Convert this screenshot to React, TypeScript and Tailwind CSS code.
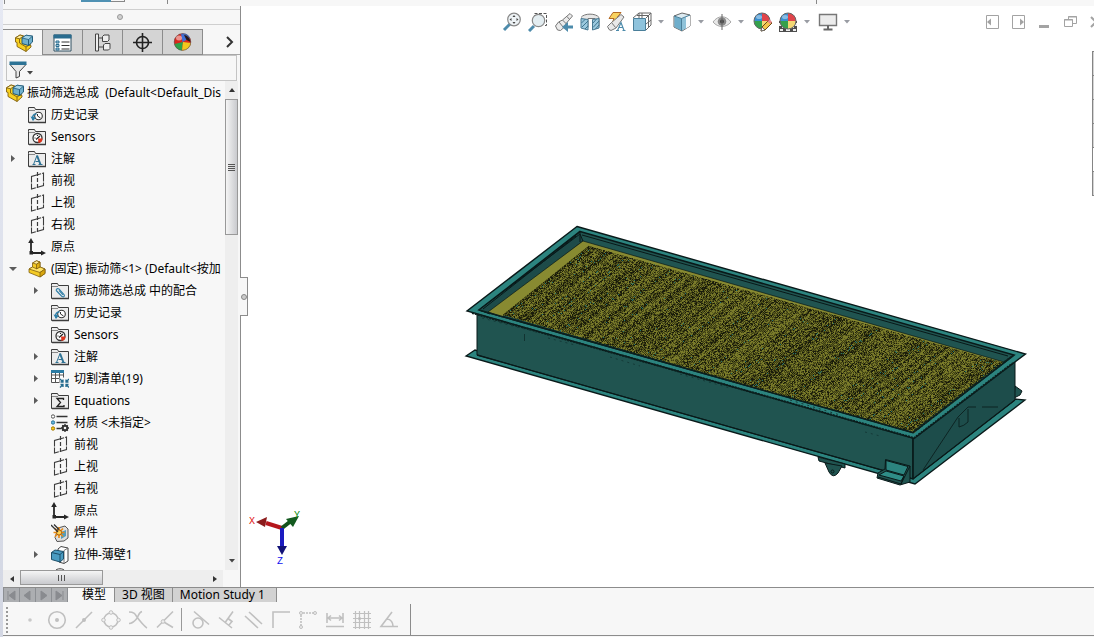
import React, { useState } from 'react';

type IconName =
  | 'assembly'
  | 'part'
  | 'history'
  | 'sensor'
  | 'note'
  | 'mate'
  | 'equation'
  | 'plane'
  | 'origin'
  | 'cutlist'
  | 'material'
  | 'weldment'
  | 'extrude'
  | 'sketch';

interface TreeNode {
  label: string;
  icon: IconName;
  level: 0 | 1 | 2;
  arrow?: 'open' | 'closed';
}

const nodes: TreeNode[] = [
  { label: '振动筛选总成  (Default<Default_Dis', icon: 'assembly', level: 0 },
  { label: '历史记录', icon: 'history', level: 1 },
  { label: 'Sensors', icon: 'sensor', level: 1 },
  { label: '注解', icon: 'note', level: 1, arrow: 'closed' },
  { label: '前视', icon: 'plane', level: 1 },
  { label: '上视', icon: 'plane', level: 1 },
  { label: '右视', icon: 'plane', level: 1 },
  { label: '原点', icon: 'origin', level: 1 },
  { label: '(固定) 振动筛<1> (Default<按加', icon: 'part', level: 1, arrow: 'open' },
  { label: '振动筛选总成 中的配合', icon: 'mate', level: 2, arrow: 'closed' },
  { label: '历史记录', icon: 'history', level: 2 },
  { label: 'Sensors', icon: 'sensor', level: 2 },
  { label: '注解', icon: 'note', level: 2, arrow: 'closed' },
  { label: '切割清单(19)', icon: 'cutlist', level: 2, arrow: 'closed' },
  { label: 'Equations', icon: 'equation', level: 2, arrow: 'closed' },
  { label: '材质 <未指定>', icon: 'material', level: 2 },
  { label: '前视', icon: 'plane', level: 2 },
  { label: '上视', icon: 'plane', level: 2 },
  { label: '右视', icon: 'plane', level: 2 },
  { label: '原点', icon: 'origin', level: 2 },
  { label: '焊件', icon: 'weldment', level: 2 },
  { label: '拉伸-薄壁1', icon: 'extrude', level: 2, arrow: 'closed' },
  { label: '', icon: 'sketch', level: 2 },
];

const Part = () => (
  <g stroke="#80600f" strokeWidth=".8" strokeLinejoin="round">
    <path d="M1 9 4.500 7V3L8.500.8 12 2v5l5 2v4.500L12 17 1 12.500z" fill="#f4cb24" />
    <path d="M4.500 3 8.500.8 12 2 8.500 4.200z" fill="#ffec9a" />
    <path d="M1 9 4.500 7 8 8.500 12 7l5 2-5 3.500z" fill="#ffe468" />
    <path d="M8.500 4.200V9L12 7V2z" fill="#e0b012" />
    <path d="M12 12.500V17l5-3.500V9z" fill="#d8a60e" />
  </g>
);

// Everything a feature-tree icon can show, on an 18px grid
const TreeIcon: React.FC<{ name: IconName }> = ({ name }) => {
  const folder = (
    <g>
      <path d="M.5 3.500V1.500h6l1 2h10v13H.5z" fill="#ececec" stroke="#3c3c3c" strokeLinejoin="round" />
      <path d="M1 4.500h6" stroke="#888" />
      <path d="M1 16.500h17" stroke="#3c3c3c" strokeWidth="1.500" />
    </g>
  );
  return (
    <svg viewBox="0 0 18 18" className="h-[18px] w-[18px] shrink-0" fill="none">
      {name === 'assembly' && (
        <g>
          <g stroke="#80600f" strokeWidth=".9" strokeLinejoin="round">
            <path d="M.5 3.800 5 1l3.500 1v8l7.500 1.500V13l-5 4.500L2 12.500V8.500L.5 8z" fill="#f8d020" />
            <path d="M.5 3.800 5 1l3.500 1L4.500 4.800z" fill="#ffee9e" />
            <path d="M4.500 4.800V9l6.500 4v4.500M11 13l5-3" />
          </g>
          <path d="m7 4 4-2.800 6.500 1V8l-4 3.500L7 9.500z" fill="#6fb0cd" stroke="#235d7b" />
          <path d="m7 4 6.500 1.500 4-3.300L11 1.200z" fill="#a4d4e8" stroke="#235d7b" strokeWidth=".8" />
          <path d="M13.500 5.500v6" stroke="#235d7b" />
        </g>
      )}
      {name === 'part' && <Part />}
      {['history', 'sensor', 'note', 'mate', 'equation'].includes(name) && folder}
      {name === 'history' && (
        <g>
          <circle cx="10.500" cy="10" r="3.800" fill="#fff" stroke="#333" strokeWidth="1.100" />
          <path d="M9.500 8v2l3 2" stroke="#333" />
          <path d="M5 14c-1.500-4 1-6.500 3.500-6" stroke="#2b7ea8" strokeWidth="1.500" />
          <path d="m2.500 10.500 5.500 1-3 3.500z" fill="#2b7ea8" />
        </g>
      )}
      {name === 'sensor' && (
        <g>
          <circle cx="9.500" cy="10" r="4.500" fill="#fff" stroke="#333" strokeWidth="1.300" />
          <path d="M10 10.500h4.500a4.500 4.500 0 0 1-4 4.500z" fill="#e0341c" />
          <path d="m8 11.500 4-3.500M6.500 10h1M9.500 7v1" stroke="#222" strokeWidth="1.200" />
        </g>
      )}
      {name === 'note' && (
        <g stroke="#2f7294">
          <path d="m9 5.500 3.500 9" strokeWidth="2" />
          <path d="M9 5.500 5.500 14.500M7.500 11.500h4M4.500 14.500h3M10.500 14.500h4" />
        </g>
      )}
      {name === 'mate' && (
        <g stroke="#2f7ea6" strokeWidth="1.100">
          <path d="m6 9 5 5.500c2 1 3-.5 2-2L8 7c-2-1-3.500.5-2.500 2l5 5M8 8.500l4 4.500" />
        </g>
      )}
      {name === 'equation' && (
        <path d="M12.500 8V6.500H6l3.500 4-3.500 4h7V13" stroke="#222" strokeWidth="1.300" />
      )}
      {name === 'plane' && (
        <g stroke="#3c3c3c">
          <path d="M3.500 4.500 15.500 1v12.500L3.500 17z" strokeWidth="1.100" strokeDasharray="10 1" />
          <path d="M9.500 0v17.500" strokeDasharray="4 2" strokeWidth="1.200" />
        </g>
      )}
      {name === 'origin' && (
        <g>
          <path d="M3 4v11h10" stroke="#262626" strokeWidth="1.800" />
          <path d="M3 0 .2 5h5.600zM18 15l-5-2.600v5.200zM1.500 13h3.500v3.500H1.500z" fill="#262626" />
        </g>
      )}
      {name === 'cutlist' && (
        <g>
          <path d="M.5 1.500h12v11H.5zM4.500 1v11M8.500 1v11M.5 5h12M.5 8.500h12" fill="#fff" stroke="#555" />
          <path d="M0 0h13v3H0z" fill="#2b7ba3" />
          <path d="M8.500 7.500H18V18H8.500z" fill="#f7f7f7" />
          <path
            d="m9 9 3 3M9.500 12H12V9.500M18 9l-3 3M17.500 12H15V9.500M9 17.500l3-3M9.500 14.500H12V17M18 17.500l-3-3M17.500 14.500H15V17"
            stroke="#246b8e"
            strokeWidth="1.300"
          />
        </g>
      )}
      {name === 'material' && (
        <g>
          <path d="M5.500 2.500h11M5.500 8.500h11M5.500 14.500h5" stroke="#333" strokeWidth="1.500" />
          <circle cx="2" cy="2.500" r="1.700" fill="#fff" stroke="#555" />
          <circle cx="2" cy="8.500" r="1.700" fill="#62b4dc" stroke="#2c7598" />
          <circle cx="2" cy="14.500" r="1.700" fill="#f8c81c" stroke="#a37a05" />
          <circle cx="14" cy="14" r="2.300" stroke="#333" strokeWidth="2" />
          <path d="M14 10v8M10 14h8M11.200 11.200l5.600 5.600M16.800 11.200l-5.600 5.600" stroke="#333" strokeWidth="1.300" strokeDasharray="2 4" />
        </g>
      )}
      {name === 'weldment' && (
        <g>
          <path d="M7 4 14 2l3 3v9l-4 3-7 .5-2-4z" fill="#dedede" stroke="#555" />
          <path d="m10 8 5-2v6l-5 3z" fill="#519dc0" />
          <path d="M8 3v11M2.500 8.500h11M4 4.500l8 8M12 4.500l-8 8" stroke="#ed8b13" strokeWidth="1.600" />
          <circle cx="8" cy="8.500" r="2.600" fill="#ffd253" stroke="#a85d09" />
          <path d="m0 1 7 7M3 .5l5 5" stroke="#333" strokeWidth="1.300" />
        </g>
      )}
      {name === 'extrude' && (
        <g strokeLinejoin="round">
          <path d="m7 3 3-2.500 7 1.500v13l-4 2.500-5-1.500z" fill="#fff" stroke="#444" />
          <path d="M13 4.500v13M13 4.500l4-2.500" stroke="#777" />
          <path d="M.5 6.500 4 4l8.500 1.500v7.500L9 16 .5 13.500z" fill="#4a9cc2" stroke="#1d4e68" />
          <path d="m.5 6.500 8.500 2 3.500-3M9 8.500V16" stroke="#1d4e68" />
        </g>
      )}
      {name === 'sketch' && <path d="M4 3c2-3 8-3 10 0v8H4z" fill="#eee" stroke="#444" />}
    </svg>
  );
};

const Caret = ({ dark = false }: { dark?: boolean }) => (
  <svg viewBox="0 0 6 4" className="h-1 w-[6px] shrink-0">
    <path d="M0 0h6L3 3.500z" fill={dark ? '#444' : '#999ca3'} />
  </svg>
);

const Ball = () => (
  <g>
    <path d="M10 9H2a8 8 0 0 1 8-8z" fill="#3a8fd0" />
    <path d="M10 9V1a8 8 0 0 1 8 8z" fill="#e0444a" />
    <path d="M2 9h8v8a8 8 0 0 1-8-8z" fill="#35a04c" />
    <path d="M10 17V9h8a8 8 0 0 1-8 8z" fill="#f3d774" />
    <circle cx="10" cy="9" r="8" fill="none" stroke="#666" strokeWidth="1" />
    <ellipse cx="7" cy="5" rx="3" ry="2" fill="#fff" opacity=".4" />
  </g>
);

const panelTabs = [
  { label: 'FeatureManager', art: null },
  {
    label: 'PropertyManager',
    art: (
      <g>
        <path d="M1 2h17v16H1z" fill="#fff" stroke="#2e4f61" />
        <path d="M.5 1.500h18v4H.5z" fill="#2a6c8f" />
        <path d="M3 8h3v2H3zM3 11.500h3v2H3zM3 15h3v2H3z" stroke="#2a6c8f" fill="#a8cfe2" />
        <path d="M8.500 9h8M8.500 12.500h8M8.500 16h8" stroke="#333" />
      </g>
    ),
  },
  {
    label: 'ConfigurationManager',
    art: (
      <g stroke="#444" fill="#eee">
        <path d="M2.500 1h3v17h-3zM5.500 5h4M5.500 14h5" />
        <path d="M9.500 3.500 11 2h5v5l-1.500 1.500h-5zM10.500 12 12 10.500h5v5L15.500 17h-5z" />
      </g>
    ),
  },
  {
    label: 'DimXpertManager',
    art: (
      <g stroke="#222" strokeWidth="1.600">
        <circle cx="9.500" cy="9.500" r="6" />
        <path d="M9.500 0v19M0 9.500h19" />
      </g>
    ),
  },
  {
    label: 'DisplayManager',
    art: (
      <g>
        <circle cx="9.500" cy="9" r="8.500" fill="#d9271c" />
        <path d="M10 9 1.500 11a8.500 8.500 0 0 0 7.500 6.500z" fill="#2da34a" />
        <path d="M9.500 9 8 1c4-1.500 8 1 9 4z" fill="#3f6fd8" />
        <path d="M9 17.500 10 9l8 1a8.500 8.500 0 0 1-9 7.500z" fill="#f4c81c" />
        <path d="M11 2c3 0 6 3 6.500 7l-4-2z" fill="#2b1717" />
        <circle cx="9.500" cy="9" r="8.300" stroke="#555" strokeWidth=".6" />
        <ellipse cx="6" cy="5" rx="3" ry="2.500" fill="#fff" opacity=".5" />
      </g>
    ),
  },
];

const viewTools: { label: string; caret?: boolean; box: string; art: React.ReactNode }[] = [
  {
    label: 'Zoom to Fit',
    box: 'w-[26px]',
    art: (
      <g>
        <path d="m8 12-6 6" stroke="#4d8bab" strokeWidth="3" />
        <circle cx="12" cy="7.500" r="6.300" fill="#eef3f6" stroke="#888" strokeWidth="1.200" />
        <path d="M12 3 10.500 5h3zM12 12 10.500 10h3zM7.500 7.500l2-1.500v3zM16.500 7.500l-2-1.500v3z" fill="#444" />
      </g>
    ),
  },
  {
    label: 'Zoom to Area',
    box: 'w-[26px]',
    art: (
      <g>
        <path d="M6.500 6V1.500h12v12H16" stroke="#555" strokeDasharray="3 1.500" />
        <path d="m6 14-5 5" stroke="#4d8bab" strokeWidth="3" />
        <circle cx="10.500" cy="8.500" r="6.200" fill="#e3edf1" stroke="#888" strokeWidth="1.200" />
      </g>
    ),
  },
  {
    label: 'Previous View',
    box: 'w-[26px]',
    art: (
      <g>
        <path d="m1.500 14 3-4 4-2L16 1.500l2.500 2.500-6 7-2 4-4 3.500-3-.5z" fill="#ebebeb" stroke="#777" />
        <path d="m5 10 4.500 5.500M8.500 8l4 4M13 4.500l2.500 3" stroke="#777" />
        <path d="M19 13.500h-5v-3.500l-6 5 6 5v-3.500h5z" fill="#4d8bab" />
      </g>
    ),
  },
  {
    label: 'Section View',
    box: 'w-[26px]',
    art: (
      <g>
        <path d="M1 5.500C4 1 16 1 19 5.500v9l-4 1V6.500H8v9" fill="#e7e7e7" stroke="#777" />
        <path d="M1 6.500 8 7.500V18l-7-2zM12.500 7.500l6.500-1V16l-6.500 2z" fill="#9cc9de" stroke="#4a7a93" />
        <path d="m1.500 11 4-4M2 15l6-6M5 17l3-3M13 11l3.500-4M13 15.500l6-6.500M15.500 17l3.500-4" stroke="#3f7691" />
      </g>
    ),
  },
  {
    label: 'Dynamic Annotation Views',
    box: 'w-[26px]',
    art: (
      <g>
        <path d="M7 .5h8L11.500 5h3l-9 7.500 2.500-6H3z" fill="#f9d35f" stroke="#b36a24" />
        <path d="m1.500 14.500 4-4L15 2.500l3 2.500-8 11-5 2.500-2-1z" fill="#e8e8e8" stroke="#777" />
        <path d="m5.500 10.500 4 5" stroke="#777" />
        <path d="M11.500 18.500 15 10.500l3 8M12.500 15.500h4.500M10 18.500h3M16.500 18.500h3" stroke="#4d8bab" strokeWidth="1.200" />
      </g>
    ),
  },
  {
    label: 'View Orientation',
    box: 'w-10',
    caret: true,
    art: (
      <g>
        <path d="m1 6 6-5h12v12l-5 5M14 6l5-5M10 1v6M7 1v6M5 3.500h12M16.500 4v11M14 12l5-4" stroke="#666" />
        <path d="M1.500 6.500h12v12h-12z" fill="#8fc3dc" stroke="#4a7f9a" />
      </g>
    ),
  },
  {
    label: 'Display Style',
    box: 'w-10',
    caret: true,
    art: (
      <g strokeLinejoin="round">
        <path d="m2 4 8-3 8 2v11l-8 5-8-4z" fill="#dcebf2" stroke="#666" />
        <path d="m2.500 4.500 7 2v12l-7-3.500z" fill="#6faecb" />
        <path d="m10 6.500 4-1.500v11.500L10 18.500z" fill="#8ec2d9" />
        <path d="m14 5 4-1.500V14l-4 2.500z" fill="#f6fafc" />
        <path d="m2 4 7.500 2.500L18 3M9.500 6.500V19" stroke="#4a7f9a" />
      </g>
    ),
  },
  {
    label: 'Hide/Show Items',
    box: 'w-10',
    caret: true,
    art: (
      <g>
        <path d="M1 10c5-7 13-7 18 0-5 6-13 6-18 0z" fill="#e8e8e8" stroke="#aaa" />
        <circle cx="10" cy="9.500" r="4.300" fill="#888" />
        <circle cx="10" cy="9.500" r="2" fill="#444" />
        <path d="M10 2v16" stroke="#666" />
      </g>
    ),
  },
  {
    label: 'Edit Appearance',
    box: 'w-[26px]',
    art: (
      <g>
        <Ball />
        <path d="m9 19 1-4 7-7 3 3-7 7z" fill="#f5c54c" stroke="#6b4a17" />
        <path d="m9 19 1-4 3 3z" fill="#fff" stroke="#555" strokeWidth=".8" />
        <path d="m15.500 9.500 2-2 2.500 2.500-2 2z" fill="#e9868a" />
      </g>
    ),
  },
  {
    label: 'Apply Scene',
    box: 'w-10',
    caret: true,
    art: (
      <g>
        <path d="M1 9h18v11H1z" fill="#4d4d4d" />
        <path d="M1 11h3v3H1zM16 11h3v3h-3zM4 14h3v2H4zM13 14h3v2h-3zM2 17h3v2H2zM8 17h4v2H8zM15 17h3v2h-3z" fill="#eee" />
        <Ball />
      </g>
    ),
  },
  {
    label: 'View Settings',
    box: 'w-10',
    caret: true,
    art: (
      <g>
        <path d="M1.500 2.500h17v11h-17z" fill="#ececec" stroke="#777" strokeWidth="1.400" />
        <path d="M10 13.500V17M5.500 17.500h9" stroke="#666" strokeWidth="2" />
      </g>
    ),
  },
];

const sketchTools: { label: string; art: React.ReactNode }[] = [
  { label: 'Point', art: <circle cx="10" cy="10" r="1.800" fill="#c9c9c9" stroke="none" /> },
  {
    label: 'Center Point',
    art: (
      <g>
        <circle cx="10" cy="10" r="8.300" />
        <circle cx="10" cy="10" r="1.200" fill="#bbb" />
      </g>
    ),
  },
  {
    label: 'Midpoint',
    art: (
      <g>
        <path d="m2 18 16-16" />
        <circle cx="10" cy="10" r="1.200" fill="#bbb" />
      </g>
    ),
  },
  {
    label: 'Quadrant',
    art: (
      <g>
        <circle cx="10" cy="10" r="7" />
        <g fill="#f0f0f0" strokeWidth="1">
          <circle cx="10" cy="2.500" r="1.800" />
          <circle cx="10" cy="17.500" r="1.800" />
          <circle cx="2.500" cy="10" r="1.800" />
          <circle cx="17.500" cy="10" r="1.800" />
        </g>
      </g>
    ),
  },
  { label: 'Intersection', art: <path d="M1 2c5 0 6 2 8 5s8 10 10 11M14 1.500c-4 1-3 5-6 8s-4 4-7 4" /> },
  {
    label: 'Nearest',
    art: (
      <g>
        <path d="M18 1.500 2 17.500M8 11.500l10 6" />
        <circle cx="8" cy="11.500" r="1.800" fill="#eee" strokeWidth="1" />
      </g>
    ),
  },
  {
    label: 'Tangent',
    art: (
      <g>
        <circle cx="8" cy="13" r="5" />
        <path d="m4 1.500 15 13" />
      </g>
    ),
  },
  { label: 'Perpendicular', art: <path d="M2 7.500 15 18M16 1.500 8.500 12M11 8.500l4 3-3 3.500" /> },
  { label: 'Parallel', art: <path d="m1 6 13 12M5 2l13 12" /> },
  { label: 'Horizontal/Vertical Lines', art: <path d="M2 18V2h17" /> },
  {
    label: 'Horizontal/Vertical to Points',
    art: (
      <g>
        <path d="M3 5v11M5 3h11" strokeDasharray="2 1" />
        <g fill="#eee" strokeWidth="1">
          <circle cx="3" cy="3" r="1.500" />
          <circle cx="17" cy="3" r="1.500" />
          <circle cx="3" cy="17" r="1.500" />
        </g>
      </g>
    ),
  },
  { label: 'Length', art: <path d="M2 3v10M18 3v10M3 8h14M6 5.500 3 8l3 2.500M14 5.500 17 8l-3 2.500M1 16.500h18" /> },
  {
    label: 'Grid',
    art: (
      <g strokeWidth="1.200">
        <path d="M1 3.500h18M1 8.500h18M1 12.500h18M1 17.500h18M3.500 1v18M7.500 1v18M12.500 1v18M16.500 1v18" />
        <circle cx="7.500" cy="8.500" r="1" fill="#aaa" />
      </g>
    ),
  },
  { label: 'Angle', art: <path d="M13 2 2 16.500h17M8 9c4 0 6 4 6 7" /> },
];

// Deterministic random numbers, so that the screen mesh never flickers between renders
function makeRandom(seed: number) {
  let s = seed;
  return () => {
    s = (s * 1664525 + 1013904223) % 4294967296;
    return s / 4294967296;
  };
}

// The wire mesh is drawn dot by dot: ribs run from the front wall to the back wall
function buildMesh() {
  const random = makeRandom(42);
  const ribs = Array.from({ length: 700 }, () => random());
  const paths = { dark: '', mid: '', light: '', teal: '' };
  for (let y = 242; y < 435; y++) {
    for (let x = 500; x < 1006; x++) {
      const u = x - 500 + (y - 313) * 1.25;
      const wave = ribs[Math.floor((u + 100) / 2.5) % 700];
      const r = random() * 0.7 + wave * 0.3;
      const checker = (x + y) % 2 === 0;
      if (r < 0.3) paths.dark += `M${x} ${y}h1v1h-1z`;
      else if (r > 0.68) paths.light += `M${x} ${y}h1v1h-1z`;
      else if (checker && wave < 0.25 && r > 0.62) paths.teal += `M${x} ${y}h1v1h-1z`;
      else if (checker) paths.mid += `M${x} ${y}h1v1h-1z`;
    }
  }
  return paths;
}

const mesh = buildMesh();

const ScreenModel = () => (
  <svg
    viewBox="241 6 853 581"
    className="absolute inset-0 h-full w-full"
    role="img"
    aria-label="振动筛"
    fill="none"
    stroke="#091919"
    strokeWidth="1"
  >
    <defs>
      <clipPath id="deck">
        <path d="M589 246 1004 363 914 433 503 315z" />
      </clipPath>
    </defs>
    {/* lower flange and far lug */}
    <path d="M466 356 475 350 913 475 1015 399 1025 400 915 484z" fill="#2c847f" strokeWidth="1.300" />
    <path d="M1015 386 1022 391 1020 395 1014 398z" fill="#205450" />
    {/* walls */}
    <path d="M477 312 913 436V479L477 355z" fill="#205450" />
    <path d="M913 436 1015 361V400L913 479z" fill="#1d4d4b" />
    {/* top flange */}
    <path d="M577 226.500 1025.500 354 914 438.500 467 311z" fill="#2c847f" strokeWidth="1.400" />
    <path d="M580 231.500 1014 355 913 432.500 479 310z" fill="#205450" strokeWidth="1.600" />
    <path d="M580 234 479 310 490 314 583 241z" fill="#1d4b49" />
    <path d="M576 236 483 309M582 235 1008 356" />
    <path d="M580 231v11" />
    <path d="M583 241 1004 362 1001 365 590 247 502 317 488 312z" fill="#888a31" strokeWidth=".7" />
    {/* mesh */}
    <g clipPath="url(#deck)" shapeRendering="crispEdges" stroke="none">
      <path d="M589 246 1004 363 914 433 503 315z" fill="#3d3e13" />
      <path d={mesh.dark} fill="#1a1c0b" />
      <path d={mesh.mid} fill="#5a5c1f" />
      <path d={mesh.light} fill="#7a7b2a" />
      <path d={mesh.teal} fill="#237671" />
    </g>
    <path d="M589 246 503 315" stroke="#222408" strokeDasharray="2 1" />
    <path d="M1011 357 914 431" stroke="#102c2b" strokeWidth="2" strokeDasharray="2 1" />
    <path d="M479 310 913 432.500 1014 355" stroke="#0b1f1e" strokeWidth="1.400" />
    <path d="M472 313 914 438 1013 363" stroke="#0b1f1e" strokeWidth="2" strokeDasharray="2 1" />
    {/* front face details */}
    <path d="M524.500 334v7" stroke="#123331" />
    <path d="M482 318 540 333M548 338 575 345M610 357 640 366M680 374 730 388M790 400 840 415M865 432 880 436" stroke="#153a38" strokeDasharray="2 4" />
    <path d="M477 355 913 479V438" strokeWidth="1.300" />
    <path d="M913 479 1015 400" strokeWidth="1.200" />
    {/* side face details */}
    <path d="M923 470 958 417 968 407h8M959 418v9q5-1 9-5v-13M982 407h16" stroke="#0d2423" />
    {/* hanging lug */}
    <path d="M818 457 845 464v4l-26-7z" fill="#205450" />
    <path d="M825 463 829 472q4 7 9 1l4-7z" fill="#205450" />
    <circle cx="832.500" cy="471.500" r="1.500" />
    {/* mounting bracket */}
    <path d="M885.500 459.500 910 466v16l-10 3-23-7 1-5 7-4z" fill="#205450" />
    <path d="M886 460.500 908 466.500 904 475 886 470z" fill="#2c847f" />
    <path d="M886 471 904 476 901 481 879 475z" fill="#2f8d87" />
    <path d="M878 477 901 484l3-8M910 466l-9 18" />
  </svg>
);

const Triad = () => (
  <svg viewBox="0 0 56 62" className="absolute bottom-[17px] left-[7px] h-[62px] w-14" role="img" aria-label="XYZ">
    <path d="m34 20-16-5" stroke="#b5161c" strokeWidth="4" />
    <path d="m8 14 11-5-2 10z" fill="#8c1c1c" />
    <path d="m34 20 9-7" stroke="#14501c" strokeWidth="4" />
    <path d="m51 8-6 11-7-8z" fill="#135a1f" />
    <path d="M34 20v20" stroke="#1b1bc0" strokeWidth="4" />
    <path d="M29 38h10l-5 9z" fill="#111177" />
    <g fontFamily="Liberation Mono, monospace" fontSize="10">
      <text x="1" y="16" fill="#e01010">X</text>
      <text x="46" y="10" fill="#0a8a10">Y</text>
      <text x="29" y="56" fill="#1010f0">Z</text>
    </g>
  </svg>
);

const TreeRow: React.FC<{ node: TreeNode }> = ({ node }) => {
  const indent = node.level === 0 ? 'pl-[3px]' : node.level === 1 ? 'pl-[6px]' : 'pl-[29px]';
  return (
    <li role="treeitem" aria-level={node.level + 1} className={`flex h-[22px] items-center ${indent}`}>
      {node.level > 0 && (
        <span className="flex w-[19px] shrink-0">
          {node.arrow && (
            <button type="button" aria-label={`Toggle ${node.label}`} className="h-3 w-2">
              <svg viewBox="0 0 8 12" className="h-3 w-2" fill="#5c5c5c">
                {node.arrow === 'open' ? <path d="M0 4h8L4 8z" /> : <path d="m2 2 4 3.500L2 9z" />}
              </svg>
            </button>
          )}
        </span>
      )}
      <TreeIcon name={node.icon} />
      <span className={`whitespace-pre ${node.level === 0 ? 'pl-[3px]' : 'pl-[5px]'}`}>{node.label}</span>
    </li>
  );
};

const FeaturePanel = () => {
  const [active, setActive] = useState(0);
  return (
    <aside className="relative flex w-[238px] shrink-0 flex-col border-r border-[#8c8c8c] bg-[#f7f7f7] pt-[3px]">
      <div className="flex h-4 shrink-0 items-center justify-center border-y border-[#cfcfcf] pr-1">
        <span className="h-[6px] w-[6px] rounded-full border border-[#999] bg-[#d0d0d0]" />
      </div>
      <div className="mt-1 flex h-[26px] shrink-0">
        {panelTabs.map((tab, i) => (
          <button
            key={tab.label}
            type="button"
            aria-label={tab.label}
            onClick={() => setActive(i)}
            className={`flex w-10 items-center justify-center border-t border-r border-[#8c8c8c] ${
              active === i ? 'pl-[2px]' : 'border-b bg-[#d4d4d4]'
            }`}
          >
            {tab.art ? (
              <svg viewBox="0 0 19 19" className="h-[19px] w-[19px]" fill="none">{tab.art}</svg>
            ) : (
              <TreeIcon name="assembly" />
            )}
          </button>
        ))}
        <button type="button" aria-label="More tabs" className="flex flex-1 items-center justify-end border-b border-[#a8a8a8] pr-[6px]">
          <svg viewBox="0 0 8 12" className="h-3 w-2" fill="none" stroke="#333" strokeWidth="2">
            <path d="m1 1 5 5-5 5" />
          </svg>
        </button>
      </div>
      <div className="mr-[3px] ml-[3px] flex h-[26px] shrink-0 items-center border border-[#c4c4c4]">
        <button type="button" aria-label="Filter" className="flex items-end pt-1 pl-[2px]">
          <svg viewBox="0 0 18 19" className="h-[19px] w-[18px]">
            <path d="M1 3.500 7 10.500V17l3.500-1.500v-5L17 3.500z" fill="#e8e8e8" stroke="#444" />
            <path d="M.5.500h17v3.500H.5z" fill="#2d7395" />
          </svg>
          <span className="pb-[5px]">
            <Caret dark />
          </span>
        </button>
        <input aria-label="Filter text" className="h-full min-w-0 flex-1 bg-transparent px-1 outline-none" />
      </div>
      <div className="flex min-h-0 flex-1">
        <ul role="tree" className="min-w-0 flex-1 overflow-hidden pt-px">
          {nodes.map((node, i) => (
            <TreeRow key={i} node={node} />
          ))}
        </ul>
        <div className="mr-[2px] flex w-[13px] shrink-0 flex-col bg-[#eeeeee]">
          <button type="button" aria-label="Scroll up" className="flex h-[18px] items-center justify-center">
            <svg viewBox="0 0 6 4" className="h-1 w-[6px]"><path d="M0 4h6L3 0z" fill="#333" /></svg>
          </button>
          <div className="flex h-[136px] flex-col items-center justify-center gap-px border border-[#999] bg-linear-to-r from-[#f5f5f5] to-[#c9cace]">
            <span className="h-px w-[7px] bg-[#555]" />
            <span className="h-px w-[7px] bg-[#555]" />
            <span className="h-px w-[7px] bg-[#555]" />
            <span className="h-px w-[7px] bg-[#555]" />
          </div>
          <button type="button" aria-label="Scroll down" className="mt-auto flex h-[18px] items-center justify-center">
            <Caret dark />
          </button>
        </div>
      </div>
      <div className="mr-[17px] flex h-[17px] shrink-0 items-stretch bg-[#eeeeee]">
        <button type="button" aria-label="Scroll left" className="flex w-[17px] items-center justify-center">
          <svg viewBox="0 0 4 6" className="h-[6px] w-1"><path d="M4 0v6L0 3z" fill="#333" /></svg>
        </button>
        <div className="mb-[2px] flex w-[83px] items-center justify-center gap-[2px] border border-[#999] bg-linear-to-b from-[#f5f5f5] to-[#c9cace]">
          <span className="h-[6px] w-px bg-[#555]" />
          <span className="h-[6px] w-px bg-[#555]" />
          <span className="h-[6px] w-px bg-[#555]" />
        </div>
        <button type="button" aria-label="Scroll right" className="ml-auto flex w-4 items-center justify-center">
          <svg viewBox="0 0 4 6" className="h-[6px] w-1"><path d="M0 0v6l4-3z" fill="#333" /></svg>
        </button>
      </div>
      {/* splitter handle, sits over the graphics area */}
      <button
        type="button"
        aria-label="Collapse panel"
        className="absolute top-[271px] -right-2 z-10 flex h-[39px] w-2 items-center justify-center border-y border-r border-[#8c8c8c] bg-[#f7f7f7]"
      >
        <span className="h-[6px] w-[6px] shrink-0 rounded-full border border-[#888] bg-[#ccc]" />
      </button>
    </aside>
  );
};

const WindowButtons = () => (
  <div className="-mr-2 flex items-center gap-[13px] text-[#a3a3a3]">
    <button type="button" aria-label="Collapse left">
      <svg viewBox="0 0 13 14" className="h-[14px] w-[13px]" fill="none" stroke="currentColor">
        <path d="M.5.500h12v13H.5z" /><path d="M1 7l4-3.500v7z" fill="currentColor" stroke="none" />
      </svg>
    </button>
    <button type="button" aria-label="Collapse right">
      <svg viewBox="0 0 13 14" className="h-[14px] w-[13px]" fill="none" stroke="currentColor">
        <path d="M.5.500h12v13H.5z" /><path d="M12 7 8 3.500v7z" fill="currentColor" stroke="none" />
      </svg>
    </button>
    <button type="button" aria-label="Minimize">
      <svg viewBox="0 0 13 14" className="h-[14px] w-[13px]"><path d="M1 10h10v3H1z" fill="currentColor" /></svg>
    </button>
    <button type="button" aria-label="Restore">
      <svg viewBox="0 0 13 14" className="h-[14px] w-[13px]" fill="none" stroke="currentColor">
        <path d="M4.500 4V1.500h8v7H9M.5 4.500h8v7h-8zM4 2h9M0 5h9" />
      </svg>
    </button>
    <button type="button" aria-label="Close">
      <svg viewBox="0 0 12 14" className="h-[14px] w-3" fill="none" stroke="currentColor" strokeWidth="2">
        <path d="m1 2 10 10M11 2 1 12" />
      </svg>
    </button>
  </div>
);

const GraphicsArea = () => (
  <main className="relative min-w-0 flex-1 overflow-hidden bg-white">
    <ScreenModel />
    <Triad />
    <div className="relative flex h-8 items-center pl-[19px]">
      <div className="flex-1" />
      <div className="flex">
        {viewTools.map((tool) => (
          <button
            key={tool.label}
            type="button"
            aria-label={tool.label}
            className={`flex items-center gap-[6px] pl-[3px] ${tool.box}`}
          >
            <svg viewBox="0 0 20 20" className="h-5 w-5 shrink-0" fill="none">{tool.art}</svg>
            {tool.caret && <Caret />}
          </button>
        ))}
      </div>
      <div className="flex flex-1 justify-end">
        <WindowButtons />
      </div>
    </div>
    {/* edge of the docked task pane */}
    <div className="absolute top-[45px] right-0 w-[2px] border-t border-l border-[#858585]">
      {[0, 1, 2, 3, 4, 5].map((i) => (
        <div key={i} className={`h-6 border-b border-[#858585] ${i === 4 ? 'bg-white' : 'bg-[#d4d4d4]'}`} />
      ))}
    </div>
  </main>
);

const bottomTabs = ['模型', '3D 视图', 'Motion Study 1'];

const BottomTabs = () => {
  const [active, setActive] = useState(0);
  return (
    <nav className="flex h-[15px] shrink-0 border-t border-[#8c8c8c] bg-[#f7f7f7]">
      <div className="flex gap-px bg-[#8c8f93] px-px">
        {['M4 2v9M11 2 5 6.500 11 11z', 'M10 2 4 6.500 10 11z', 'M5 2l6 4.500L5 11z', 'M11 2v9M4 2l6 4.500L4 11z'].map((d) => (
          <button key={d} type="button" aria-label="Scroll tabs" className="flex w-[15px] items-center justify-center bg-[#acaeb1]">
            <svg viewBox="0 0 15 13" className="h-[13px] w-[15px]" fill="#898b8f" stroke="#898b8f"><path d={d} /></svg>
          </button>
        ))}
      </div>
      {bottomTabs.map((tab, i) => (
        <button
          key={tab}
          type="button"
          onClick={() => setActive(i)}
          className={`flex items-center border-r border-[#8c8c8c] text-[12px] leading-[14px] ${
            i === 0 ? 'pr-2 pl-[14px]' : i === 1 ? 'px-[7px]' : 'pr-[11px] pl-[7px]'
          } ${active === i ? 'bg-[#f7f7f7]' : 'bg-[#d2d2d2]'}`}
        >
          {tab}
        </button>
      ))}
    </nav>
  );
};

const SketchBar = () => (
  <div className="flex h-[34px] shrink-0 items-center border-b border-[#8c8c8c] bg-[#f7f7f7] pt-[2px]">
    <span className="mx-[3px] h-[26px] border-l-2 border-dotted border-[#999]" />
    <div className="ml-[5px] flex">
      {sketchTools.map((tool, i) => (
        <React.Fragment key={tool.label}>
          {i === 6 && <span className="mr-[4px] ml-[3px] h-[23px] w-px bg-[#999]" />}
          <button type="button" aria-label={tool.label} className="flex w-[27px] items-center justify-center">
            <svg viewBox="0 0 20 20" className="h-5 w-5" fill="none" stroke="#c0c0c0" strokeWidth="1.600">
              {tool.art}
            </svg>
          </button>
        </React.Fragment>
      ))}
    </div>
    <span className="ml-2 h-full w-px bg-[#8c8c8c]" />
  </div>
);

const App = () => (
  <div className="flex h-screen overflow-hidden bg-[#f7f7f7] font-['Noto_Sans','Noto_Sans_CJK_SC',sans-serif] text-[12px] leading-4 text-black">
    <div className="w-[3px] shrink-0 bg-linear-to-b from-[#e6e9f3] to-[#d3d7e3]" />
    <div className="flex min-w-0 flex-1 flex-col">
      <header className="flex h-[6px] shrink-0 items-start bg-[#f7f7f7]">
        <span className="ml-px h-1 w-px bg-[#888]" />
        <span className="ml-[76px] h-[2px] w-[30px] bg-[#4f91b3]" />
        <span className="h-[2px] w-[14px] border-r border-b border-[#888]" />
        <span className="ml-[42px] h-1 w-px bg-[#888]" />
        <span className="ml-[648px] h-1 w-px bg-[#888]" />
      </header>
      <div className="flex min-h-0 flex-1">
        <FeaturePanel />
        <GraphicsArea />
      </div>
      <BottomTabs />
      <SketchBar />
      <div className="h-px shrink-0" />
    </div>
  </div>
);

export default App;
